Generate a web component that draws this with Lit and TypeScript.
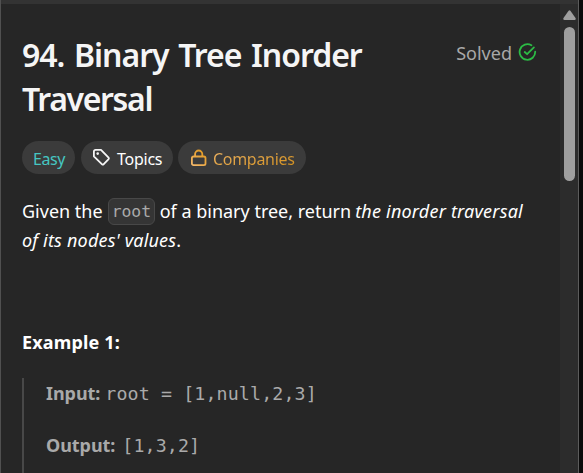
import { LitElement, html, css } from "lit";
import { customElement } from "lit/decorators.js";

@customElement("problem-tags")
export class ProblemTags extends LitElement {
  static styles = css`
    :host { display: flex; gap: 6px; height: 33px; }
    .tag {
      display: flex; align-items: center; box-sizing: border-box; height: 33px;
      padding: 2px 11px 0; border-radius: 17px; background: #3b3b3b;
      font-size: 16px; line-height: 22px; white-space: nowrap;
    }
    .easy { width: 53px; color: #46c6c2; letter-spacing: -0.45px; }
    .topics { width: 92px; letter-spacing: -0.25px; }
    .companies { width: 128px; margin-left: -1px; color: #dba03c; letter-spacing: -0.3px; }
    svg { flex: none; margin-top: -2px; }
    .topics svg { margin-right: 6px; }
    .companies svg { margin: -3px 6px 0 1px; }
    .gold {
      background: linear-gradient(165deg, #efb66a, #d08c16);
      -webkit-background-clip: text; background-clip: text; color: transparent;
    }
  `;
  render() {
    return html`
      <div class="tag easy">Easy</div>
      <div class="tag topics">
        <svg width="19" height="19" viewBox="0 0 19 19" fill="none" stroke="#f5f5f5" stroke-width="1.8" stroke-linejoin="round">
          <path d="M1.9 3.6Q1.9 1.9 3.6 1.9H9L16.6 9.7Q17.2 10.4 16.6 11.1L11.5 16.3Q10.8 17 10.1 16.3L1.9 8.4Z" />
          <circle cx="5.7" cy="5.6" r="1.3" fill="#f5f5f5" stroke="none" />
        </svg>
        <span>Topics</span>
      </div>
      <div class="tag companies">
        <svg width="17" height="19" viewBox="0 0 17 19" fill="none" stroke="url(#lock)" stroke-width="1.8">
          <defs>
            <linearGradient id="lock" gradientUnits="userSpaceOnUse" x1="2" y1="17" x2="14" y2="2">
              <stop offset="0" stop-color="#f5b96b" /><stop offset="1" stop-color="#e0971c" />
            </linearGradient>
          </defs>
          <rect x="1.9" y="8.5" width="13.6" height="8.6" rx="1.6" />
          <path d="M5.1 8.4V6.1A3.6 3.6 0 0 1 12.3 6.1V8.4" />
        </svg>
        <span class="gold">Companies</span>
      </div>
    `;
  }
}

@customElement("scroll-bar")
export class ScrollBar extends LitElement {
  static styles = css`
    :host { display: flex; flex-direction: column; align-items: center; width: 18px; background: #2c2c2c; }
    svg { display: block; margin: 6px 0 7px 1px; }
    .thumb { width: 11px; height: 154px; border-radius: 6px; background: #9f9f9f; margin-left: 1px; }
  `;
  render() {
    return html`
      <svg width="13" height="10" viewBox="0 0 13 10" fill="#9f9f9f">
        <path d="M5.6.7Q6.5-.3 7.4.7L12.5 8Q13.2 10 11.6 10H1.4Q-.2 10 .5 8Z" />
      </svg>
      <div class="thumb"></div>
    `;
  }
}

@customElement("app-root")
export class AppRoot extends LitElement {
  static styles = css`
    :host {
      display: flex; flex-direction: column; box-sizing: border-box; width: 583px; height: 473px;
      overflow: hidden; background: #262626; color: #fff;
      font-family: "Noto Sans", "Open Sans", sans-serif; font-size: 18px; line-height: 29px;
      border-left: 1px solid #505050;
    }
    .topbar { flex: none; height: 4px; width: 578px; background: #333; }
    .frame { display: flex; flex: 1; min-height: 0; }
    .shell { display: flex; height: 473px; }
    .column { display: flex; flex-direction: column; width: 577px; }
    .edge { width: 1px; background: #5c5c5c; }
    .outside { flex: 1; background: #0a0a0a; }
    .content { box-sizing: border-box; width: 559px; padding: 29px 22px 0 21px; overflow: hidden; white-space: nowrap; }
    .heading { display: flex; justify-content: space-between; height: 89px; }
    h1 { margin: 0; font-size: 32px; line-height: 44px; font-weight: 600; color: #f5f5f5; }
    .line { display: block; letter-spacing: -1.02px; word-spacing: 2.3px; }
    .line.second { letter-spacing: -1.35px; }
    .solved { display: flex; align-items: center; gap: 6px; height: 40px; margin-right: 1px; color: #a8a8a8; }
    .solved svg { margin-top: -1px; }
    problem-tags { margin-top: 19px; }
    p { margin: 23px 0 0; }
    .row { display: flex; align-items: center; height: 29px; }
    code { font-family: "DejaVu Sans Mono", monospace; color: #aaa; }
    .chip {
      box-sizing: border-box; width: 47px; height: 27px; margin: 0 5px; padding: 0 0 0 3px;
      border: 1px solid #484848; border-radius: 6px; background: #353535;
      font-size: 16.4px; line-height: 25px;
    }
    em.first { letter-spacing: 0.2px; margin-left: 4px; }
    em.second { letter-spacing: 0.19px; }
    .example { margin-top: 73px; font-weight: 700; letter-spacing: 0.15px; }
    .block {
      box-sizing: border-box; height: 130px; margin-top: 21px; padding: 1px 0 0 22px;
      border-left: 2px solid #484848; color: #a9a9a9;
    }
    .io { display: flex; align-items: center; height: 29px; gap: 5px; }
    .io + .io { margin-top: 23px; gap: 7px; }
    .io code { font-size: 18.3px; letter-spacing: 0.12px; }
    .io strong { letter-spacing: -0.05px; }
  `;
  render() {
    return html`
      <div class="shell">
        <div class="column">
          <div class="topbar"></div>
          <div class="frame">
            <div class="content">
              <div class="heading">
                <h1><span class="line">94. Binary Tree Inorder</span><span class="line second">Traversal</span></h1>
                <div class="solved">
                  <span>Solved</span>
                  <svg width="19" height="19" viewBox="0 0 19 19" fill="none" stroke="#2cbb45" stroke-width="1.8" stroke-linecap="round" stroke-linejoin="round">
                    <path d="M13.4 2.3A7.8 7.8 0 1 0 17.2 8.6" />
                    <path d="M6.7 9L9.1 11.2L15.9 4.4" />
                  </svg>
                </div>
              </div>
              <problem-tags></problem-tags>
              <p>
                <span class="row"><span>Given the</span><code class="chip">root</code><span>of a binary tree, return</span><em class="first">the inorder traversal</em></span>
                <span class="row"><em class="second">of its nodes' values</em>.</span>
              </p>
              <div class="example">Example 1:</div>
              <div class="block">
                <div class="io"><strong>Input:</strong><code>root = [1,null,2,3]</code></div>
                <div class="io"><strong>Output:</strong><code>[1,3,2]</code></div>
              </div>
            </div>
            <scroll-bar></scroll-bar>
          </div>
        </div>
        <div class="edge"></div>
        <div class="outside"></div>
      </div>
    `;
  }
}
